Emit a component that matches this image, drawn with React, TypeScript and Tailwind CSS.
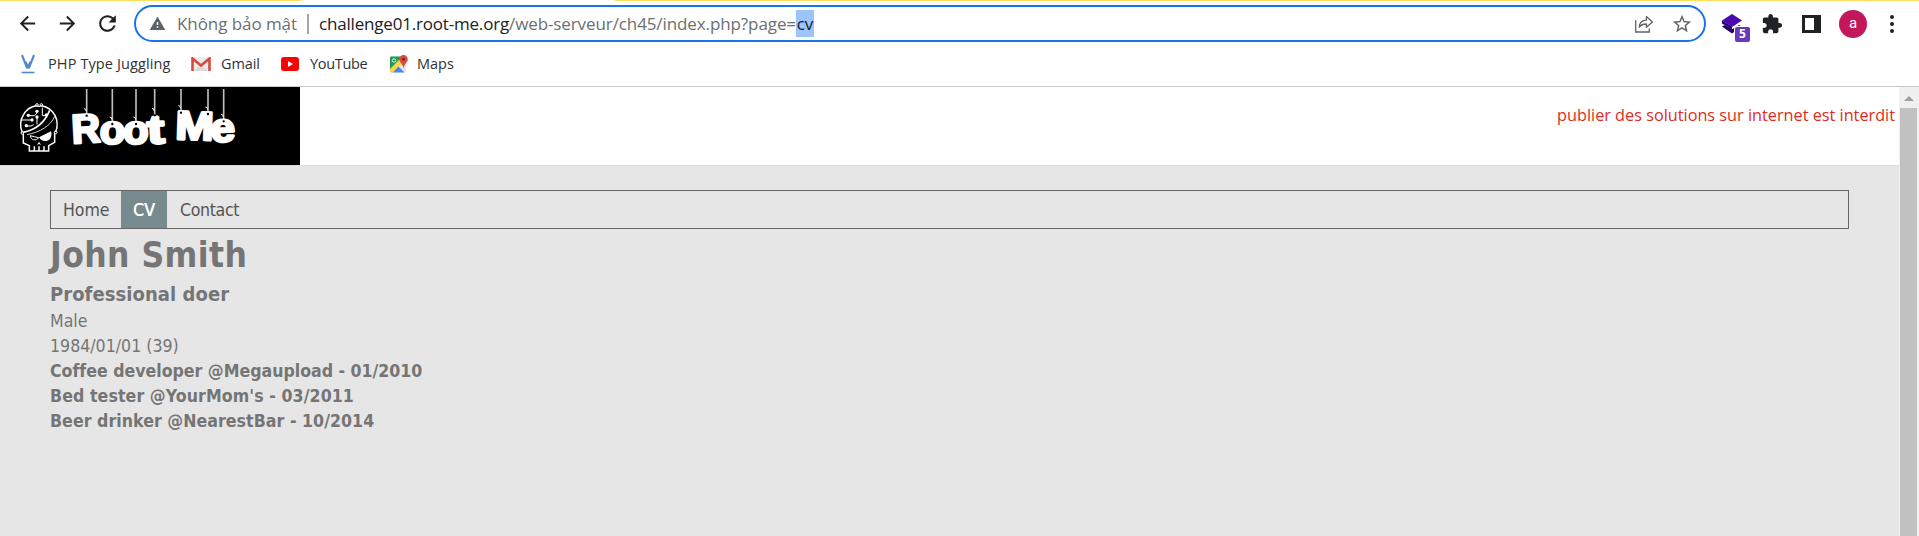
import React from "react";

const ui = "font-['Open_Sans','Noto_Sans',sans-serif]";

function Arrow({ flip }: { flip?: boolean }) {
  return (
    <svg viewBox="0 0 24 24" className={flip ? "size-[23px] shrink-0 rotate-180" : "size-[23px] shrink-0"} fill="#202124">
      <path d="M20 11H7.830l5.590-5.590L12 4l-8 8 8 8 1.410-1.410L7.830 13H20v-2z" />
    </svg>
  );
}

function ShareIcon() {
  return (
    <svg viewBox="0 0 18 18" className="h-[18px] w-[18px]" fill="none" stroke="#5f6368" strokeWidth="1.3">
      <path d="M.7 5.200V17h13.600v-3.600" />
      <path d="M4.200 12.200C4.500 7.600 7 5.300 11.400 5.100V1.600l6 5.400-6 5.200V9C8 9 5.800 10 4.200 12.200z" strokeLinejoin="round" />
    </svg>
  );
}

function LayersIcon() {
  return (
    <svg viewBox="0 0 20 20" className="size-5">
      <path d="M0 12.600L3 11l7 4.200L17 11l3 1.600L10 19.500z" fill="#26006b" />
      <path d="M0 6.500L10 12.500v3L0 9.500z" fill="#26006b" />
      <path d="M10 0l10 6.500-10 6.500L0 6.500z" fill="#4a08b0" />
    </svg>
  );
}

function Toolbar() {
  return (
    <div className="flex h-[45px] items-center pl-4">
      <Arrow />
      <div className="ml-[17px] flex"><Arrow flip /></div>
      <svg viewBox="0 0 24 24" className="ml-4 size-[25px] shrink-0" fill="#202124">
        <path d="M17.650 6.350C16.200 4.900 14.210 4 12 4c-4.420 0-7.990 3.580-7.990 8s3.570 8 7.990 8c3.730 0 6.840-2.550 7.730-6h-2.080c-.82 2.330-3.040 4-5.650 4-3.310 0-6-2.690-6-6s2.690-6 6-6c1.660 0 3.140.69 4.220 1.780L13 11h7V4l-2.350 2.350z" />
      </svg>
      <div className="ml-[14px] flex h-[37px] w-[1572px] shrink-0 items-center rounded-full border-2 border-[#1a73e8] bg-white pr-[11px] pl-[13px] text-[17px] whitespace-pre">
        <svg viewBox="0 0 24 24" className="size-[17px] shrink-0" fill="#5f6368">
          <path d="M1 21h22L12 2 1 21zm12-3h-2v-2h2v2zm0-4h-2v-4h2v4z" />
        </svg>
        <span className="ml-[11px] w-[130px] tracking-[-0.07px] text-[#6b6f73]">Không bảo mật</span>
        <span className="h-5 w-[2px] bg-[#a3a5a8]" />
        <span className="ml-[10px] w-[190px] tracking-[-0.19px] text-[#202124]">challenge01.root-me.org</span>
        <span className="w-[287px] tracking-[-0.1px] text-[#6b6f73]">/web-serveur/ch45/index.php?page=</span>
        <span className="flex h-[27px] w-[18px] items-center justify-center bg-[#9dc4f8] text-[#202124]">cv</span>
        <div className="ml-auto flex items-center gap-[18px]">
          <ShareIcon />
          <svg viewBox="0 0 24 24" className="size-[22px]" fill="#5f6368">
            <path d="M22 9.240l-7.190-.62L12 2 9.190 8.630 2 9.240l5.460 4.730L5.820 21 12 17.270 18.180 21l-1.630-7.030L22 9.240zM12 15.400l-3.760 2.270 1-4.280-3.320-2.880 4.380-.38L12 6.100l1.710 4.040 4.380.38-3.320 2.880 1 4.280L12 15.400z" />
          </svg>
        </div>
      </div>
      <div className="relative ml-4 h-5 w-7 shrink-0">
        <LayersIcon />
        <span className="absolute top-[12px] left-[12px] flex h-[17px] w-[17px] items-center justify-center rounded-[3px] border border-white bg-[#673ab7] text-[12px] font-bold text-white">5</span>
      </div>
      <svg viewBox="0 0 24 24" className="ml-[11px] size-[22px] shrink-0" fill="#202124">
        <path d="M20.500 11H19V7c0-1.100-.9-2-2-2h-4V3.500C13 2.120 11.880 1 10.500 1S8 2.120 8 3.500V5H4c-1.100 0-1.990.9-1.990 2v3.800H3.500c1.490 0 2.700 1.210 2.700 2.700s-1.210 2.700-2.700 2.700H2V20c0 1.100.9 2 2 2h3.800v-1.500c0-1.490 1.210-2.700 2.700-2.700s2.700 1.210 2.700 2.700V22H17c1.100 0 2-.9 2-2v-4h1.500c1.380 0 2.500-1.120 2.500-2.500S21.880 11 20.500 11z" />
      </svg>
      <div className="ml-[19px] h-[18px] w-[19px] shrink-0 border-y-[3px] border-r-[7px] border-l-[3px] border-[#202124]" />
      <div className="ml-[18px] flex size-7 shrink-0 items-center justify-center rounded-full bg-[#c2185b] pb-px font-['Roboto',sans-serif] text-[15px] text-white">a</div>
      <div className="ml-[23px] flex flex-col gap-[3px]">
        <span className="size-1 rounded-full bg-[#202124]" />
        <span className="size-1 rounded-full bg-[#202124]" />
        <span className="size-1 rounded-full bg-[#202124]" />
      </div>
    </div>
  );
}

function Bookmarks() {
  return (
    <div className="flex h-9 items-center pl-[21px] text-[14.5px] whitespace-nowrap text-[#2f3235]">
      <div className="flex w-[170px] items-center">
        <svg viewBox="0 0 14 20" className="h-5 w-[14px]" fill="none">
          <path d="M1 1L5.800 13.500h2.400L13 1" stroke="#5089cc" strokeWidth="2.100" />
          <path d="M4.800 7.500L7 12.500 9.200 7.500" stroke="#5089cc" strokeWidth="1.500" />
          <path d="M.5 18.500h13" stroke="#5089cc" strokeWidth="1.600" />
        </svg>
        <span className="ml-[13px] tracking-[0.12px]">PHP Type Juggling</span>
      </div>
      <div className="flex w-[90px] items-center">
        <svg viewBox="0 0 20 14" className="h-[14px] w-5">
          <path d="M1 0h18v14H1z" fill="#eceaea" />
          <path d="M3 14L10 7l7 7z" fill="#dcdada" />
          <path d="M1.500 14V1.500L10 8.500l8.500-7V14" fill="none" stroke="#d54b3d" strokeWidth="2.600" />
        </svg>
        <span className="ml-[10px] tracking-[-0.1px]">Gmail</span>
      </div>
      <div className="flex w-[109px] items-center">
        <svg viewBox="0 0 18 14" className="h-[14px] w-[18px]">
          <rect width="18" height="14" rx="3" fill="#f00" />
          <path d="M7 4l5 3-5 3z" fill="#fff" />
        </svg>
        <span className="ml-[11px] tracking-[-0.32px]">YouTube</span>
      </div>
      <div className="flex items-center">
        <svg viewBox="0 0 18 18" className="size-[18px]">
          <path d="M0 2.500Q0 1.500 1 1.500H12L16 8v8.500q0 1-1 1H1q-1 0-1-1z" fill="#e4e4e4" />
          <path d="M0 2.500Q0 1.500 1 1.500H13L0 14.500z" fill="#219a56" />
          <path d="M0 16.500V14L12 2l2.500 4L3 17.500H1z" fill="#fbd540" />
          <path d="M2.800 17.500L8.500 11.500l6 6z" fill="#4687f1" />
          <circle cx="4" cy="5.500" r="1.700" fill="none" stroke="#e8f5ec" strokeWidth="1" />
          <path d="M13.500 0a4.200 4.200 0 0 1 4.300 4.200c0 3.300-3.600 4.300-4.200 9.300-.7-5-4.300-6-4.300-9.300A4.200 4.200 0 0 1 13.500 0z" fill="#dd4b3e" />
          <circle cx="13.500" cy="4.300" r="1.500" fill="#7d231c" />
        </svg>
        <span className="ml-[9px]">Maps</span>
      </div>
    </div>
  );
}

const strings: [number, number][] = [
  [50, 91], [127, 116], [198, 116], [254, 90], [333, 82], [414, 86], [461, 108],
];

function Logo() {
  return (
    <svg viewBox="0 0 300 78" className="h-[78px] w-[300px] shrink-0 bg-black">
      <g transform="translate(15 8) scale(.33333)" fill="none" stroke="#fff" strokeWidth="4.500">
        <path d="M22 112C14 94 16 74 26 58 36 41 50 34 64 32M80 32c16 3 32 14 40 29 8 16 8 34 2 50" />
        <path d="M64 32l8 3 8-3" strokeWidth="3" />
        <circle cx="66" cy="30" r="4" strokeWidth="3" /><circle cx="79" cy="30" r="4" strokeWidth="3" />
        <circle cx="22" cy="114" r="4" strokeWidth="3" /><circle cx="122" cy="112" r="4" strokeWidth="3" />
        <path d="M24 112C56 106 88 86 104 46" strokeWidth="5" />
        <path d="M36 119C74 112 108 92 119 64" strokeWidth="2.500" />
        <path d="M25 116v28l18 8v16h58v-16l18-10v-28" />
        <path d="M58 168v-14M72 168v-14M87 168v-14" />
        <path d="M18 75h32M36 93h12l8-4M40 62h18l8-8M66 68v20M82 38v24h16" strokeWidth="3" />
        <g fill="#fff" stroke="none">
          <circle cx="51" cy="75" r="5" /><circle cx="34" cy="92" r="5" /><circle cx="40" cy="61" r="5" />
          <circle cx="66" cy="49" r="5" /><circle cx="66" cy="66" r="5" /><circle cx="94" cy="60" r="5" />
          <path d="M72 127l36-18c4 14-1 26-14 29-10 1-18-3-22-11z" />
          <path d="M66 150l6-10 6 10-6-3z" />
        </g>
        <path d="M46 122c1 14 18 17 25 6-8-1-16-4-25-6z" strokeWidth="3" />
      </g>
      <g transform="translate(70 -2) scale(.33333)">
        {strings.map(([x, y]) => (
          <g key={x} fill="none" stroke="#bdbdbd">
            <path d={`M${x} 12V${y}`} strokeWidth="5" />
            <path d={`M${x - 8} ${y - 20}q7 0 7 8`} stroke="#fff" strokeWidth="3" />
          </g>
        ))}
        <g fill="#fff" stroke="#fff" strokeWidth="8" strokeLinejoin="round" fontWeight="700" fontSize="121" style={{ fontFamily: "'Liberation Sans', Arial, sans-serif" }}>
          <text transform="translate(7 175) rotate(-3)" textLength="86" lengthAdjust="spacingAndGlyphs">R</text>
          <text x="89" y="178" textLength="76" lengthAdjust="spacingAndGlyphs">o</text>
          <text x="160" y="178" textLength="76" lengthAdjust="spacingAndGlyphs">o</text>
          <text transform="translate(233 176) rotate(-3)" textLength="52" lengthAdjust="spacingAndGlyphs">t</text>
          <text transform="translate(315 162) rotate(2)" textLength="115" lengthAdjust="spacingAndGlyphs">M</text>
          <text transform="translate(424 172) rotate(-3)" textLength="73" lengthAdjust="spacingAndGlyphs">e</text>
        </g>
        {strings.map(([x, y]) => <circle key={x} cx={x} cy={y + 1} r="3.500" fill="#000" />)}
      </g>
    </svg>
  );
}

const jobs = [
  { text: "Coffee developer @Megaupload - 01/2010", cls: "tracking-[-0.01px]" },
  { text: "Bed tester @YourMom's - 03/2011", cls: "tracking-[0.08px]" },
  { text: "Beer drinker @NearestBar - 10/2014", cls: "tracking-[0.04px]" },
];

export default function App() {
  return (
    <div className={`flex h-[536px] w-[1919px] flex-col overflow-hidden bg-white ${ui}`}>
      <div className="flex h-px shrink-0 justify-between">
        <span className="w-[301px] bg-[#ffdf5e]" />
        <span className="w-[1304px] bg-[#ffdf5e]" />
      </div>
      <div className="h-[86px] shrink-0 border-b border-[#c9cacc]">
        <Toolbar />
        <Bookmarks />
      </div>
      <div className="flex min-h-0 flex-1">
        <main className="flex w-[1899px] flex-col bg-[#e6e6e6]">
          <header className="flex h-[78px] shrink-0 justify-between bg-white shadow-[0_1px_0_#dcdcdc]">
            <Logo />
            <span className="mt-4 mr-1 h-6 text-[16.25px] leading-6 text-[#dd2c1e]">publier des solutions sur internet est interdit</span>
          </header>
          <div className="px-[50px] pt-[25px] font-['DejaVu_Sans_Condensed','DejaVu_Sans',Tahoma,sans-serif] text-[17.6px] leading-[25px] [font-stretch:condensed] text-[#757575]">
            <nav className="flex h-[39px] border border-[#666] text-[#555]">
              <a className="flex w-[70px] items-center pt-px pl-[12px] tracking-[-0.1px]">Home</a>
              <a className="flex w-[46px] items-center justify-center bg-[#778a8e] pt-px text-white [text-shadow:0.3px_0_0_#fff]">CV</a>
              <a className="flex items-center pt-px pl-[13px] tracking-[-0.35px]">Contact</a>
            </nav>
            <h1 className="text-[35px] leading-[52px] font-bold tracking-[0.45px]">John Smith</h1>
            <h2 className="pb-px text-[20px] leading-[27px] font-bold tracking-[0.06px]">Professional doer</h2>
            <p>Male</p>
            <p>1984/01/01 (39)</p>
            {jobs.map((j) => <p key={j.text} className={`font-bold ${j.cls}`}>{j.text}</p>)}
          </div>
        </main>
        <div className="flex w-5 flex-col items-center bg-[#f0f0f0]">
          <div className="flex h-[21px] shrink-0 items-center justify-center">
            <svg viewBox="0 0 10 5" className="mt-[2px] h-[5px] w-[10px]"><path d="M0 5L5 0l5 5z" fill="#a0a0a0" /></svg>
          </div>
          <div className="mr-px w-[17px] flex-1 bg-[#c1c1c1]" />
        </div>
      </div>
    </div>
  );
}
